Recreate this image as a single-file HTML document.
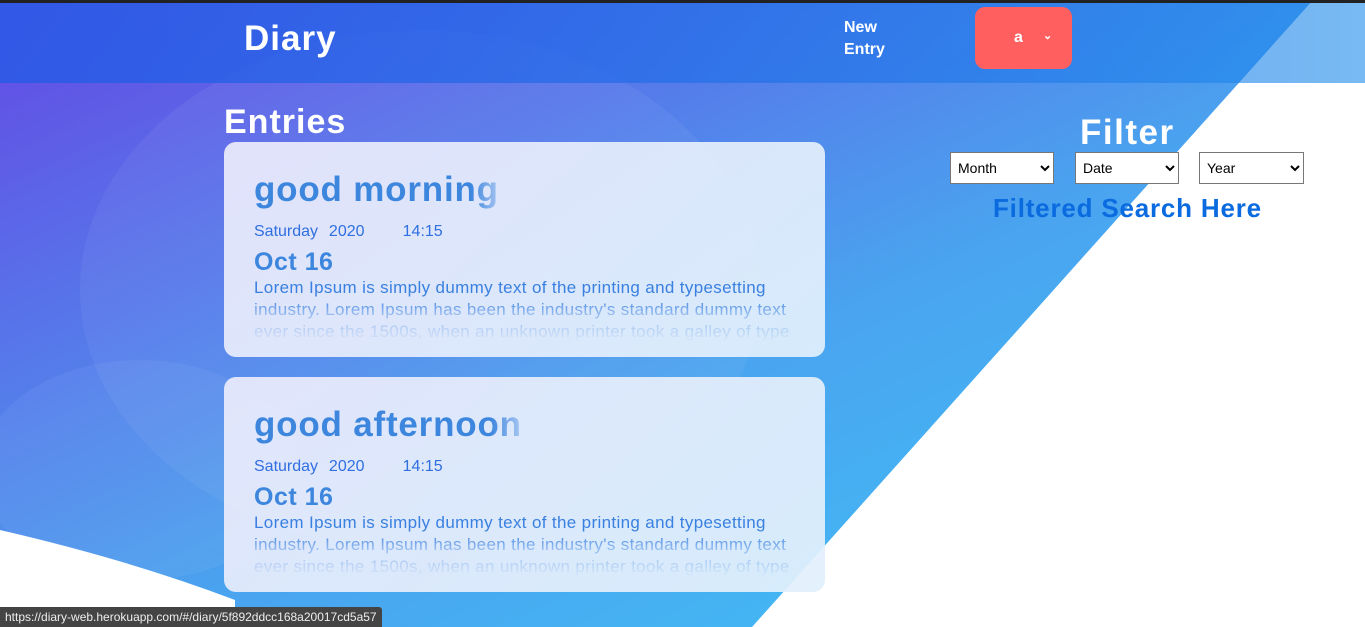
<!DOCTYPE html>
<html><head><style>
*{margin:0;padding:0;box-sizing:border-box}
body{width:1365px;height:627px;overflow:hidden;position:relative;font-family:"Liberation Sans",sans-serif;background:#fff}
.bg{position:absolute;left:0;top:0}
.hdr{position:absolute;left:0;top:3px;width:1365px;height:80px;background:linear-gradient(90deg,rgba(40,90,230,.85),rgba(30,140,235,.6));}
.topline{position:absolute;left:0;top:0;width:1365px;height:3px;background:#222}
.logo{position:absolute;left:244px;top:19px;color:#fff;font-size:35px;font-weight:bold;letter-spacing:1px}
.new{position:absolute;left:844px;top:17px;color:#fff;font-size:16px;font-weight:bold;line-height:22px}
.btn{position:absolute;left:975px;top:7px;width:97px;height:62px;background:#ff5f5f;border-radius:10px;color:#fff;font-weight:bold;font-size:16px}
.btn span{position:absolute;left:39px;top:22px}
.btn i{position:absolute;left:68px;top:22px;font-style:normal;font-size:11px}
h1{position:absolute;left:224px;top:103px;color:#fff;font-size:34px;font-weight:900;letter-spacing:1px}
.card{position:absolute;left:224px;width:601px;height:215px;border-radius:12px;background:linear-gradient(135deg,rgba(235,235,252,.93),rgba(225,240,252,.93));overflow:hidden}
.card h2{position:absolute;left:30px;top:28px;font-size:35px;letter-spacing:.8px;font-weight:900;background:linear-gradient(90deg,#3d86de 85%,rgba(61,134,222,0.1));-webkit-background-clip:text;color:transparent;padding-right:10px}
.card .d{position:absolute;left:30px;top:81px;color:#2f6fe0;font-size:16px;word-spacing:1px}
.card .o{position:absolute;left:30px;top:106px;color:#3d86de;font-size:25px;font-weight:900;letter-spacing:.5px}
.card p{position:absolute;left:30px;top:135px;width:550px;color:#3a80e0;font-size:17px;letter-spacing:.35px;line-height:22px;height:66px;-webkit-mask-image:linear-gradient(#000 30%,rgba(0,0,0,.45) 55%,rgba(0,0,0,0) 100%)}
.filt{position:absolute;left:1080px;top:113px;color:#fff;font-size:35px;font-weight:900;letter-spacing:1.5px}
select{position:absolute;top:152px;height:32px;font-size:14px;font-family:"Liberation Sans",sans-serif;background:#fff;border:1px solid #777;padding-left:3px;color:#000}
.fs{position:absolute;left:993px;top:193px;color:#0a6ae0;font-size:26px;font-weight:900;letter-spacing:.8px}
.url{position:absolute;left:0;top:607px;height:20px;background:#444;color:#eee;font-size:12px;padding:3px 5px;border-radius:0 3px 0 0}
</style></head><body>
<svg class="bg" width="1365" height="627">
<defs><linearGradient id="g" x1="0" y1="0" x2="1" y2="1"><stop offset="0" stop-color="#6448e4"/><stop offset=".55" stop-color="#4aa3ef"/><stop offset="1" stop-color="#3ec6f7"/></linearGradient></defs>
<rect width="1365" height="627" fill="url(#g)"/>
<ellipse cx="420" cy="290" rx="340" ry="260" fill="rgba(255,255,255,.05)"/>
<ellipse cx="140" cy="470" rx="160" ry="110" fill="rgba(255,255,255,.05)"/>
<path d="M0 530 Q130 560 235 600 L235 627 L0 627Z" fill="#fff"/>
<polygon points="1313,0 1365,0 1365,627 752,627" fill="#fff"/>
</svg>
<div class="hdr"></div><div class="topline"></div>
<div class="logo">Diary</div>
<div class="new">New<br>Entry</div>
<div class="btn"><span>a</span><i>⌄</i></div>
<h1>Entries</h1>
<div class="card" style="top:142px"><h2>good morning</h2><div class="d">Saturday &nbsp;2020 &nbsp;&nbsp;&nbsp;&nbsp;&nbsp; 14:15</div><div class="o">Oct 16</div><p>Lorem Ipsum is simply dummy text of the printing and typesetting industry. Lorem Ipsum has been the industry's standard dummy text ever since the 1500s, when an unknown printer took a galley of type</p></div>
<div class="card" style="top:377px"><h2>good afternoon</h2><div class="d">Saturday &nbsp;2020 &nbsp;&nbsp;&nbsp;&nbsp;&nbsp; 14:15</div><div class="o">Oct 16</div><p>Lorem Ipsum is simply dummy text of the printing and typesetting industry. Lorem Ipsum has been the industry's standard dummy text ever since the 1500s, when an unknown printer took a galley of type</p></div>
<div class="filt">Filter</div>
<select style="left:950px;width:104px"><option>Month</option></select>
<select style="left:1075px;width:104px"><option>Date</option></select>
<select style="left:1199px;width:105px"><option>Year</option></select>
<div class="fs">Filtered Search Here</div>
<div class="url">https://diary-web.herokuapp.com/#/diary/5f892ddcc168a20017cd5a57</div>
</body></html>
